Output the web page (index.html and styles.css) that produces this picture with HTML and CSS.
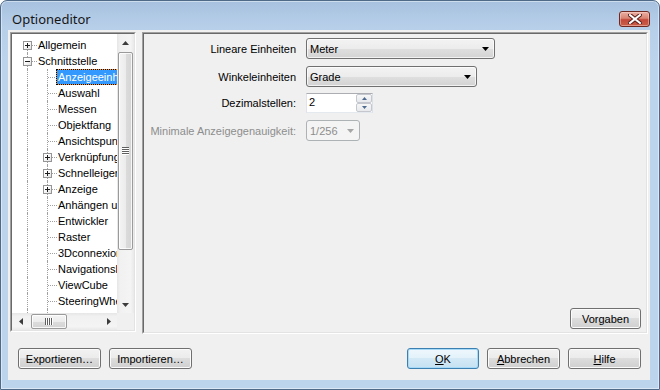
FILE: index.html
```html
<!DOCTYPE html>
<html>
<head>
<meta charset="utf-8">
<title>Optioneditor</title>
<link rel="stylesheet" href="styles.css">
</head>
<body>
<div class="window">
  <div class="titlebar">
    <span class="title">Optioneditor</span>
    <div class="close">
      <svg width="14" height="10" viewBox="0 0 14 10"><path d="M2 1 L12 9 M12 1 L2 9" stroke="#5a1f1a" stroke-width="4" stroke-linecap="square"/><path d="M2 1 L12 9 M12 1 L2 9" stroke="#ffffff" stroke-width="2" stroke-linecap="square"/></svg>
    </div>
  </div>
  <div class="client">
    <div class="top">
      <div class="sunken tree-outer">
        <div class="sunken-in tree">
          <div class="tv">
            <div class="row"><span class="c first"><i class="box plus"></i></span><span class="lbl">Allgemein</span></div>
            <div class="row"><span class="c mid"><i class="box"></i></span><span class="lbl">Schnittstelle</span></div>
            <div class="row"><span class="c line"></span><span class="c mid"></span><span class="lbl sel">Anzeigeeinheiten</span></div>
            <div class="row"><span class="c line"></span><span class="c mid"></span><span class="lbl">Auswahl</span></div>
            <div class="row"><span class="c line"></span><span class="c mid"></span><span class="lbl">Messen</span></div>
            <div class="row"><span class="c line"></span><span class="c mid"></span><span class="lbl">Objektfang</span></div>
            <div class="row"><span class="c line"></span><span class="c mid"></span><span class="lbl">Ansichtspunkte</span></div>
            <div class="row"><span class="c line"></span><span class="c mid"><i class="box plus"></i></span><span class="lbl">Verknüpfungen</span></div>
            <div class="row"><span class="c line"></span><span class="c mid"><i class="box plus"></i></span><span class="lbl">Schnelleigenschaften</span></div>
            <div class="row"><span class="c line"></span><span class="c mid"><i class="box plus"></i></span><span class="lbl">Anzeige</span></div>
            <div class="row"><span class="c line"></span><span class="c mid"></span><span class="lbl">Anhängen und Einfügen</span></div>
            <div class="row"><span class="c line"></span><span class="c mid"></span><span class="lbl">Entwickler</span></div>
            <div class="row"><span class="c line"></span><span class="c mid"></span><span class="lbl">Raster</span></div>
            <div class="row"><span class="c line"></span><span class="c mid"></span><span class="lbl">3Dconnexion</span></div>
            <div class="row"><span class="c line"></span><span class="c mid"></span><span class="lbl">Navigationsleiste</span></div>
            <div class="row"><span class="c line"></span><span class="c mid"></span><span class="lbl">ViewCube</span></div>
            <div class="row"><span class="c line"></span><span class="c mid"></span><span class="lbl">SteeringWheels</span></div>
            <div class="row"><span class="c line"></span><span class="c mid"></span><span class="lbl">Benutzeroberfläche</span></div>
          </div>
          <div class="vscroll">
            <div class="sbtn"><svg width="7" height="4" viewBox="0 0 7 4"><polygon points="0,4 7,4 3.5,0" fill="#3c3c3c"/></svg></div>
            <div class="vtrack">
              <div class="vthumb">
                <svg width="7" height="8" viewBox="0 0 7 8"><path d="M0 0.5h7M0 2.5h7M0 4.5h7M0 6.5h7" stroke="#5f5f5f" stroke-width="1"/><path d="M0 1.5h7M0 3.5h7M0 5.5h7M0 7.5h7" stroke="#ffffff" stroke-width="1"/></svg>
              </div>
            </div>
            <div class="sbtn"><svg width="7" height="4" viewBox="0 0 7 4"><polygon points="0,0 7,0 3.5,4" fill="#3c3c3c"/></svg></div>
          </div>
          <div class="hscroll">
            <div class="sbtn"><svg width="4" height="7" viewBox="0 0 4 7"><polygon points="4,0 4,7 0,3.5" fill="#3c3c3c"/></svg></div>
            <div class="htrack">
              <div class="hthumb">
                <svg width="8" height="7" viewBox="0 0 8 7"><path d="M0.5 0v7M2.5 0v7M4.5 0v7M6.5 0v7" stroke="#5f5f5f" stroke-width="1"/><path d="M1.5 0v7M3.5 0v7M5.5 0v7M7.5 0v7" stroke="#ffffff" stroke-width="1"/></svg>
              </div>
            </div>
            <div class="sbtn"><svg width="4" height="7" viewBox="0 0 4 7"><polygon points="0,0 0,7 4,3.5" fill="#3c3c3c"/></svg></div>
          </div>
          <div class="corner"></div>
        </div>
      </div>
      <div class="sunken panel-outer">
        <div class="sunken-in panel">
          <div class="form">
            <div class="frow r1">
              <span class="flbl">Lineare Einheiten</span>
              <div class="combo w1"><span>Meter</span><svg class="arrow" width="7" height="4" viewBox="0 0 7 4"><polygon points="0,0 7,0 3.5,4" fill="#000"/></svg></div>
            </div>
            <div class="frow r2">
              <span class="flbl">Winkeleinheiten</span>
              <div class="combo w2"><span>Grade</span><svg class="arrow" width="7" height="4" viewBox="0 0 7 4"><polygon points="0,0 7,0 3.5,4" fill="#000"/></svg></div>
            </div>
            <div class="frow r3">
              <span class="flbl">Dezimalstellen:</span>
              <div class="spin">
                <span class="spin-edit">2</span>
                <div class="spin-btns">
                  <div class="sb"><svg width="5" height="3" viewBox="0 0 5 3"><polygon points="0,3 5,3 2.5,0" fill="#4e6a8e"/></svg></div>
                  <div class="sb"><svg width="5" height="3" viewBox="0 0 5 3"><polygon points="0,0 5,0 2.5,3" fill="#4e6a8e"/></svg></div>
                </div>
              </div>
            </div>
            <div class="frow r4">
              <span class="flbl dis">Minimale Anzeigegenauigkeit:</span>
              <div class="combo w4 disabled"><span>1/256</span><svg class="arrow" width="7" height="4" viewBox="0 0 7 4"><polygon points="0,0 7,0 3.5,4" fill="#a6a6a6"/></svg></div>
            </div>
          </div>
          <div class="panel-foot">
            <button class="btn vorgaben">Vorgaben</button>
          </div>
        </div>
      </div>
    </div>
    <div class="bottom">
      <button class="btn wide">Exportieren…</button>
      <button class="btn wide">Importieren…</button>
      <div class="spacer"></div>
      <button class="btn default ok"><u>O</u>K</button>
      <button class="btn mid"><u>A</u>bbrechen</button>
      <button class="btn mid"><u>H</u>ilfe</button>
    </div>
  </div>
</div>
</body>
</html>
```

FILE: styles.css
```css
* { box-sizing: border-box; }
html, body { margin: 0; padding: 0; }
body {
  width: 660px;
  height: 390px;
  overflow: hidden;
  background: #ffffff;
  font-family: "Liberation Sans", Arial, sans-serif;
  font-size: 11px;
  color: #000;
}

.window {
  width: 660px;
  height: 390px;
  border: 1px solid #4f6a88;
  border-radius: 7px 7px 0 0;
  background: linear-gradient(180deg, #a6c1df 0px, #b8cfe9 26px, #bdd4ed 60px, #bdd4ed 100%);
  box-shadow: inset 0 0 0 1px rgba(255, 255, 255, 0.45);
  display: flex;
  flex-direction: column;
}

.titlebar {
  height: 29px;
  padding: 6px 9px 0 11px;
  display: flex;
  align-items: center;
  justify-content: space-between;
}
.title {
  font-family: "Noto Sans", "Open Sans", sans-serif;
  font-size: 13px;
  color: #161616;
}
.close {
  width: 31px;
  height: 16px;
  border: 1px solid #6e2a22;
  border-radius: 3px;
  background: linear-gradient(180deg, #eab1a6 0%, #d98371 45%, #c4493a 55%, #c95f48 100%);
  box-shadow: inset 0 0 0 1px rgba(255, 220, 210, 0.45);
  display: flex;
  align-items: center;
  justify-content: center;
}

.client {
  margin: 0 9px 0 7px;
  height: 350px;
  background: #f0f0f0;
  display: flex;
  flex-direction: column;
}

.top {
  display: flex;
  gap: 6px;
  margin: 2px 2px 0 2px;
  height: 302px;
}

.sunken {
  border: 1px solid;
  border-color: #a0a0a0 #ffffff #ffffff #a0a0a0;
}
.sunken-in {
  border: 1px solid;
  border-color: #696969 #e3e3e3 #e3e3e3 #696969;
  height: 100%;
}

.tree-outer { width: 126px; height: 300px; }
.tree {
  background: #ffffff;
  display: grid;
  grid-template-columns: 105px 17px;
  grid-template-rows: 279px 17px;
}
.tv {
  overflow: hidden;
  padding: 3px 0 0 5px;
}
.row {
  display: flex;
  height: 16px;
  white-space: nowrap;
}
.c {
  position: relative;
  flex: none;
  width: 20px;
  height: 16px;
}
.c::before, .c::after {
  content: "";
  position: absolute;
}
.c.line::before, .c.mid::before {
  left: 10px;
  top: 0;
  bottom: 0;
  border-left: 1px dotted #a0a0a0;
}
.c.first::before {
  left: 10px;
  top: 8px;
  bottom: 0;
  border-left: 1px dotted #a0a0a0;
}
.c.first::after, .c.mid::after {
  left: 11px;
  right: 0;
  top: 8px;
  border-top: 1px dotted #a0a0a0;
}
.box {
  position: absolute;
  z-index: 1;
  left: 6px;
  top: 4px;
  width: 9px;
  height: 9px;
  border: 1px solid #959595;
  background: linear-gradient(135deg, #ffffff 30%, #e2e2e2 100%);
}
.box::before {
  content: "";
  position: absolute;
  left: 1px;
  top: 3px;
  width: 5px;
  height: 1px;
  background: #1e1e1e;
}
.box.plus::after {
  content: "";
  position: absolute;
  left: 3px;
  top: 1px;
  width: 1px;
  height: 5px;
  background: #1e1e1e;
}
.lbl {
  margin-left: -1px;
  padding: 0 2px;
  height: 16px;
  line-height: 16px;
}
.lbl.sel {
  background: #3399ff;
  color: #ffffff;
  outline: 1px dotted #000;
  outline-offset: -1px;
  box-shadow: inset 0 0 0 1px #ff9b1f;
}

.vscroll {
  grid-column: 2;
  grid-row: 1;
  display: flex;
  flex-direction: column;
  background: linear-gradient(90deg, #e6e6e6 0%, #f1f1f1 20%, #f4f4f4 80%, #e9e9e9 100%);
}
.hscroll {
  grid-column: 1;
  grid-row: 2;
  display: flex;
  background: linear-gradient(180deg, #e6e6e6 0%, #f1f1f1 20%, #f4f4f4 80%, #e9e9e9 100%);
}
.corner {
  grid-column: 2;
  grid-row: 2;
  background: #f0f0f0;
}
.sbtn {
  flex: none;
  width: 17px;
  height: 17px;
  display: flex;
  align-items: center;
  justify-content: center;
}
.vtrack { flex: 1; padding: 1px 1px 0 1px; }
.vthumb {
  height: 198px;
  border: 1px solid #9a9a9a;
  border-radius: 2px;
  background: linear-gradient(90deg, #f4f4f4 0%, #ececec 50%, #dcdcdc 51%, #d4d4d4 100%);
  box-shadow: inset 0 0 0 1px rgba(255, 255, 255, 0.8);
  display: flex;
  align-items: center;
  justify-content: center;
}
.htrack { flex: 1; padding: 1px 0 1px 2px; }
.hthumb {
  width: 36px;
  height: 15px;
  border: 1px solid #9a9a9a;
  border-radius: 2px;
  background: linear-gradient(180deg, #f4f4f4 0%, #ececec 50%, #dcdcdc 51%, #d4d4d4 100%);
  box-shadow: inset 0 0 0 1px rgba(255, 255, 255, 0.8);
  display: flex;
  align-items: center;
  justify-content: center;
}

.panel-outer { flex: 1; height: 302px; }
.panel {
  background: #f0f0f0;
  display: flex;
  flex-direction: column;
}
.form {
  padding-top: 4px;
  display: flex;
  flex-direction: column;
}
.frow {
  display: flex;
  align-items: center;
  gap: 10px;
}
.frow.r1 { margin-bottom: 7px; }
.frow.r2 { margin-bottom: 6px; }
.frow.r3 { margin-bottom: 7px; }
.flbl {
  width: 152px;
  flex: none;
  text-align: right;
  white-space: nowrap;
}
.flbl.dis { color: #8d8d8d; }

.combo {
  height: 21px;
  border: 1px solid #707070;
  border-radius: 3px;
  background: linear-gradient(180deg, #f3f3f3 0%, #ececec 50%, #dfdfdf 51%, #d3d3d3 100%);
  box-shadow: inset 0 0 0 1px rgba(255, 255, 255, 0.7);
  display: flex;
  align-items: center;
  padding-left: 3px;
}
.combo .arrow { margin-left: auto; margin-right: 5px; }
.combo.w1 { width: 189px; }
.combo.w2 { width: 171px; }
.combo.w4 { width: 54px; }
.combo.disabled {
  border-color: #adb2b5;
  background: #f4f4f4;
  box-shadow: none;
  color: #8d8d8d;
}

.spin {
  width: 67px;
  height: 20px;
  border: 1px solid;
  border-color: #abadb3 #dbdfe6 #e3e9ef #e2e3ea;
  background: #ffffff;
  display: flex;
}
.spin-edit {
  flex: 1;
  padding-left: 2px;
  line-height: 16px;
}
.spin-btns {
  width: 16px;
  display: flex;
  flex-direction: column;
  padding: 0 0 0 0;
}
.sb {
  flex: 1;
  border: 1px solid #c4c8ce;
  border-radius: 2px;
  background: linear-gradient(180deg, #f7f7f7 0%, #e7e9ec 100%);
  display: flex;
  align-items: center;
  justify-content: center;
}

.panel-foot {
  margin-top: auto;
  display: flex;
  justify-content: flex-end;
  padding: 0 5px 3px 0;
}

.btn {
  font-family: "Liberation Sans", Arial, sans-serif;
  font-size: 11px;
  color: #000;
  height: 21px;
  padding: 0;
  border: 1px solid #707070;
  border-radius: 3px;
  background: linear-gradient(180deg, #f2f2f2 0%, #ebebeb 49%, #dddddd 50%, #cfcfcf 100%);
  box-shadow: inset 0 0 0 1px #fbfbfb;
}
.btn u { text-decoration: underline; text-underline-offset: 1px; }
.btn.vorgaben { width: 71px; }
.btn.wide { width: 83px; }
.btn.ok { width: 72px; }
.btn.mid { width: 73px; }
.btn.default {
  border-color: #3c7fb1;
  box-shadow: inset 0 0 0 1px #a7daf6;
  background: linear-gradient(180deg, #eef7fc 0%, #e3f1fa 49%, #d3e9f6 50%, #c6e1f2 100%);
}

.bottom {
  display: flex;
  gap: 8px;
  margin-top: 14px;
  padding: 0 9px 0 10px;
}
.spacer { flex: 1; }
```
